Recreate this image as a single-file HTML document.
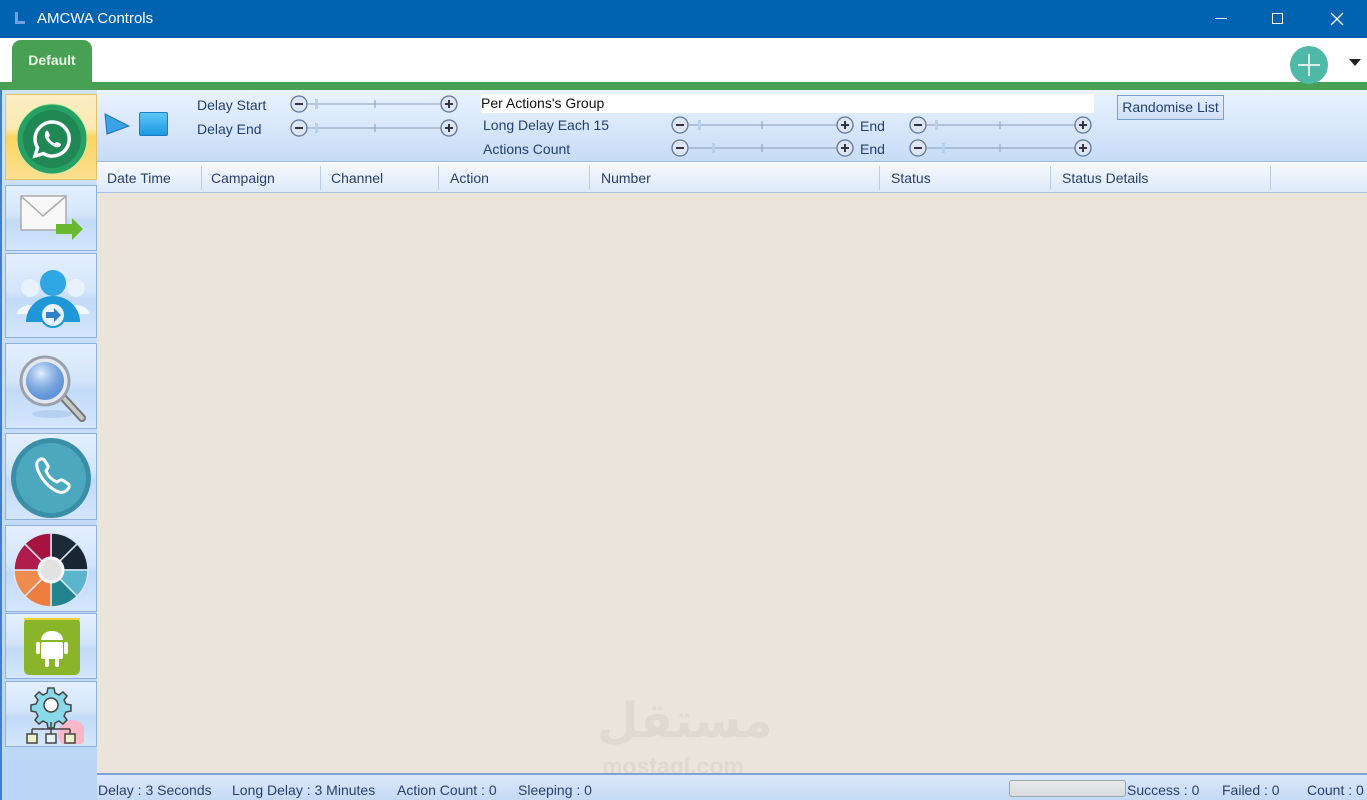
<!DOCTYPE html>
<html><head><meta charset="utf-8"><style>
*{margin:0;padding:0;box-sizing:border-box}
body{width:1367px;height:800px;overflow:hidden;position:relative;background:#fff;font-family:"Liberation Sans",sans-serif;font-size:14px;color:#1e3a6e}
.a{position:absolute}
#title{left:0;top:0;width:1367px;height:38px;background:#0063b1;color:#fff;font-size:15px}
#tabbar{left:0;top:38px;width:1367px;height:44px;background:#fff}
#green{left:0;top:82px;width:1367px;height:8px;background:#48a055}
#tab{left:12px;top:40px;width:80px;height:44px;background:#48a055;border-radius:9px 9px 0 0;color:#e8f5e0;font-weight:bold;font-size:14px;text-align:center;line-height:40px}
#side{left:0;top:90px;width:97px;height:710px;background:linear-gradient(#cfe2fb,#bcd6f7);border-left:2px solid #3f7fcf}
.btn{position:absolute;left:3px;width:92px;border:1px solid #8fb0d8;background:linear-gradient(#e4effd 0%,#d3e5fb 45%,#c2daf8 55%,#d3e6fc 100%)}
#tool{left:97px;top:90px;width:1270px;height:72px;background:linear-gradient(#eaf3fe,#c7dcf6);border-bottom:1px solid #9fbbe0}
#hdr{left:97px;top:163px;width:1270px;height:30px;background:linear-gradient(#f5f9ff,#dde9f8);border-bottom:1px solid #a9c0df;font-size:14px;color:#2a3f66}
.hc{position:absolute;top:7px}
.sep{position:absolute;top:3px;width:1px;height:24px;background:#b9cde6}
#grid{left:97px;top:193px;width:1270px;height:580px;background:#ebe4da}
#status{left:97px;top:773px;width:1270px;height:27px;background:linear-gradient(#dbe8fa,#c5daf5);border-top:2px solid #7ea3d6;font-size:14px;color:#2b3f6a}
.st{position:absolute;top:7px}
.lbl{position:absolute;font-size:14px;color:#24406e}
</style></head><body>
<div id="title" class="a">
 <svg class="a" style="left:14px;top:11px" width="12" height="14"><rect x="1" y="1" width="3" height="12" fill="#6fa0e0"/><rect x="1" y="10" width="10" height="3" fill="#6fa0e0"/></svg>
 <span class="a" style="left:37px;top:10px">AMCWA Controls</span>
 <div class="a" style="left:1215px;top:18px;width:12px;height:1px;background:#fff"></div>
 <div class="a" style="left:1272px;top:13px;width:11px;height:11px;border:1px solid #fff"></div>
 <svg class="a" style="left:1330px;top:12px" width="14" height="14"><path d="M1 1L13 13M13 1L1 13" stroke="#fff" stroke-width="1.3"/></svg>
</div>
<div id="tabbar" class="a"></div>
<div id="tab" class="a">Default</div>
<div id="green" class="a"></div>
<svg class="a" style="left:1290px;top:46px" width="40" height="40"><circle cx="19" cy="19" r="19" fill="#4fb9a8"/><path d="M19 8V30M8 19H30" stroke="#d8f0ec" stroke-width="2"/></svg>
<svg class="a" style="left:1348px;top:58px" width="14" height="10"><path d="M1 1H13L7 8Z" fill="#222"/></svg>

<div id="side" class="a">
 <div class="btn" style="top:4px;height:86px;background:linear-gradient(#fbeec4 0%,#fbe9b3 40%,#fbd560 50%,#fbe090 100%);border-color:#e0c16c">
  <svg class="a" style="left:10px;top:8px" width="72" height="72"><circle cx="36" cy="36" r="35" fill="#27a063" stroke="#c8e8a8"/><circle cx="36" cy="36" r="29" fill="#1f8855"/><path d="M36 19a17 17 0 0 0-14.5 25.8L19 53l8.5-2.4A17 17 0 1 0 36 19z" fill="none" stroke="#fff" stroke-width="3.5"/><path d="M29.5 29c1-2 2.5-1.5 3 0l1.3 3c.3 1-1.300 2-1 2.8 1.2 2.5 3 4.200 5.5 5.3 1 .3 1.7-1.5 2.7-1.2l3 1.4c1.3.6 1.4 2 0 3-2.5 2-6 1-10-2.5S27.5 33 29.5 29z" fill="#fff"/></svg>
 </div>
 <div class="btn" style="top:95px;height:66px">
  <svg class="a" style="left:14px;top:8px" width="66" height="50"><rect x="1" y="2" width="45" height="34" fill="#f8f8f8" stroke="#aaa" stroke-width="1.5"/><path d="M2 3L23 22L45 3" fill="none" stroke="#aaa" stroke-width="1.5"/><path d="M36 30H52V24L63 35L52 46V40H36Z" fill="#6ab82e"/></svg>
 </div>
 <div class="btn" style="top:163px;height:85px">
  <svg class="a" style="left:8px;top:10px" width="78" height="68"><circle cx="16" cy="24" r="9" fill="#e8f2fc"/><circle cx="62" cy="24" r="9" fill="#e8f2fc"/><path d="M2 50a15 14 0 0 1 28 0z" fill="#f0f7fe"/><path d="M48 50a15 14 0 0 1 28 0z" fill="#f0f7fe"/><circle cx="39" cy="19" r="13" fill="#31a6e4"/><path d="M12 58a27 26 0 0 1 54 0z" fill="#1f97d7"/><circle cx="39" cy="51" r="12" fill="#e8f3fd" stroke="#1f97d7" stroke-width="2"/><path d="M32 48h8v-4l7 7-7 7v-4h-8z" fill="#2f82c9"/></svg>
 </div>
 <div class="btn" style="top:253px;height:86px">
  <svg class="a" style="left:10px;top:8px" width="76" height="72"><defs><radialGradient id="g" cx="0.4" cy="0.3" r="0.7"><stop offset="0" stop-color="#e8f2ff"/><stop offset="1" stop-color="#5a8fd4" stop-opacity="0.3"/></radialGradient></defs><ellipse cx="36" cy="62" rx="20" ry="4" fill="#b6d0ee"/><path d="M44 42L66 66" stroke="#777" stroke-width="8" stroke-linecap="round"/><path d="M44 42L66 66" stroke="#c8c8c8" stroke-width="4" stroke-linecap="round"/><circle cx="29" cy="29" r="24" fill="#e4e8ee" stroke="#9aa2ad" stroke-width="3"/><circle cx="29" cy="29" r="19" fill="#5f95d8"/><circle cx="29" cy="29" r="19" fill="url(#g)"/></svg>
 </div>
 <div class="btn" style="top:343px;height:87px">
  <svg class="a" style="left:4px;top:3px" width="82" height="82"><circle cx="41" cy="41" r="40" fill="#3a8ea8"/><circle cx="41" cy="41" r="35" fill="#4ba8be"/><path d="M28 24c3-3 5-3 7 0l3 5c1 2-2 4-2 5 2 5 6 9 11 11 1 0 3-3 5-2l5 3c3 2 3 4 0 7-4 4-10 3-18-4S24 29 28 24z" fill="none" stroke="#fff" stroke-width="3"/></svg>
 </div>
 <div class="btn" style="top:435px;height:87px">
  <svg class="a" style="left:7px;top:6px" width="76" height="76" viewBox="-38 -38 76 76">
   <g stroke="#d8e6f5" stroke-width="1.5">
   <path d="M0 0L0-37A37 37 0 0 1 26.2-26.2Z" fill="#1b2a36"/>
   <path d="M0 0L26.2-26.2A37 37 0 0 1 37 0Z" fill="#1a2732"/>
   <path d="M0 0L37 0A37 37 0 0 1 26.2 26.2Z" fill="#5bb5cc"/>
   <path d="M0 0L26.2 26.2A37 37 0 0 1 0 37Z" fill="#23838f"/>
   <path d="M0 0L0 37A37 37 0 0 1-26.2 26.2Z" fill="#ee7d3f"/>
   <path d="M0 0L-26.2 26.2A37 37 0 0 1-37 0Z" fill="#ef8b4c"/>
   <path d="M0 0L-37 0A37 37 0 0 1-26.2-26.2Z" fill="#b01c4b"/>
   <path d="M0 0L-26.2-26.2A37 37 0 0 1 0-37Z" fill="#a8123f"/></g>
   <circle r="12" fill="#e2e2e2" stroke="#f6f6f6" stroke-width="3"/></svg>
 </div>
 <div class="btn" style="top:523px;height:66px">
  <svg class="a" style="left:18px;top:4px" width="56" height="57"><rect x="0" y="0" width="56" height="57" rx="5" fill="#8ab42a"/><rect x="0" y="0" width="56" height="2" fill="#f0d040"/><path d="M17 22a11 9 0 0 1 22 0z" fill="#fff"/><rect x="17" y="24" width="22" height="17" rx="2" fill="#fff"/><rect x="12" y="24" width="4" height="12" rx="2" fill="#fff"/><rect x="40" y="24" width="4" height="12" rx="2" fill="#fff"/><rect x="21" y="40" width="4" height="9" rx="2" fill="#fff"/><rect x="31" y="40" width="4" height="9" rx="2" fill="#fff"/></svg>
 </div>
 <div class="btn" style="top:591px;height:66px">
  <svg class="a" style="left:18px;top:4px" width="60" height="58"><circle cx="48" cy="48" r="14" fill="#f8b8c8"/><g transform="translate(27 19)"><g fill="#8ad9ea" stroke="#444" stroke-width="1.5"><path d="M-3-17h6l1 5 4 2 4-3 4 4-3 4 2 4 5 1v6l-5 1-2 4 3 4-4 4-4-3-4 2-1 5h-6l-1-5-4-2-4 3-4-4 3-4-2-4-5-1v-6l5-1 2-4-3-4 4-4 4 3 4-2z"/></g><circle r="7" fill="#fff" stroke="#444" stroke-width="1.5"/></g><path d="M27 36v7M8 43h38M8 43v5M27 43v5M46 43v5" stroke="#444" stroke-width="1.5" fill="none"/><rect x="3" y="48" width="10" height="9" fill="#eef0c8" stroke="#444" stroke-width="1.5"/><rect x="22" y="48" width="10" height="9" fill="#e8f0fa" stroke="#444" stroke-width="1.5"/><rect x="41" y="48" width="10" height="9" fill="#eef0c8" stroke="#444" stroke-width="1.5"/></svg>
 </div>
</div>

<div id="tool" class="a">
 <svg class="a" style="left:6px;top:22px" width="28" height="24"><path d="M2 2L26 14L4 22Z" fill="#3aa3e6" stroke="#1f6fb8"/></svg>
 <div class="a" style="left:42px;top:22px;width:29px;height:24px;background:linear-gradient(#5cc8f7,#1d97e0);border:1px solid #1a7fc4;border-radius:2px"></div>
 <span class="lbl" style="left:100px;top:7px">Delay Start</span>
 <span class="lbl" style="left:100px;top:31px">Delay End</span>
 <div class="a" style="left:384px;top:4px;width:613px;height:19px;background:#fff"></div>
 <span class="lbl" style="left:384px;top:5px;color:#111">Per Actions's Group</span>
 <span class="lbl" style="left:386px;top:27px">Long Delay Each 15</span>
 <span class="lbl" style="left:386px;top:51px">Actions Count</span>
 <span class="lbl" style="left:763px;top:28px">End</span>
 <span class="lbl" style="left:763px;top:51px">End</span>
 <div class="a" style="left:1020px;top:5px;width:107px;height:25px;border:1px solid #7a9fd0;background:linear-gradient(#e4eefc,#cfe0f7);font-size:14px;color:#24406e;text-align:center;line-height:22px">Randomise List</div>
 <svg class="a" style="left:0;top:0" width="1000" height="72">
  <defs>
  <g id="c"><circle cx="0" cy="0" r="8" fill="#dde6f2" stroke="#5f7598" stroke-width="1.3"/><path d="M-4 0H4" stroke="#334" stroke-width="2"/></g>
  <g id="p"><circle cx="0" cy="0" r="8" fill="#dde6f2" stroke="#5f7598" stroke-width="1.3"/><path d="M-4 0H4M0-4V4" stroke="#334" stroke-width="2"/></g>
  <g id="s"><line x1="9" y1="0" x2="149" y2="0" stroke="#8a9bb5"/><line x1="76" y1="-4" x2="76" y2="4" stroke="#8a9bb5"/><rect x="16" y="-5" width="3" height="10" fill="#b8d0ec"/><use href="#c"/><use href="#p" x="150"/></g>
  <g id="l"><line x1="9" y1="0" x2="157" y2="0" stroke="#8a9bb5"/><line x1="82" y1="-4" x2="82" y2="4" stroke="#8a9bb5"/><use href="#c"/><use href="#p" x="165"/></g>
  </defs>
  <use href="#s" x="202" y="14"/><use href="#s" x="202" y="38"/>
  <use href="#l" x="583" y="35"/><rect x="601" y="30" width="3" height="10" fill="#b8d0ec"/>
  <use href="#l" x="583" y="58"/><rect x="615" y="53" width="3" height="10" fill="#b8d0ec"/>
  <use href="#l" x="821" y="35"/><rect x="838" y="30" width="3" height="10" fill="#b8d0ec"/>
  <use href="#l" x="821" y="58"/><rect x="845" y="53" width="3" height="10" fill="#b8d0ec"/>
 </svg>
</div>

<div id="hdr" class="a">
 <span class="hc" style="left:10px">Date Time</span><div class="sep" style="left:104px"></div>
 <span class="hc" style="left:114px">Campaign</span><div class="sep" style="left:223px"></div>
 <span class="hc" style="left:234px">Channel</span><div class="sep" style="left:341px"></div>
 <span class="hc" style="left:353px">Action</span><div class="sep" style="left:492px"></div>
 <span class="hc" style="left:504px">Number</span><div class="sep" style="left:782px"></div>
 <span class="hc" style="left:794px">Status</span><div class="sep" style="left:953px"></div>
 <span class="hc" style="left:965px">Status Details</span><div class="sep" style="left:1173px"></div>
</div>
<div id="grid" class="a">
 <div class="a" style="left:500px;top:500px;font-size:48px;font-weight:bold;color:#e0d9d0;font-family:'DejaVu Sans',sans-serif">مستقل</div>
 <div class="a" style="left:505px;top:560px;font-size:23px;font-weight:bold;color:#e0d9d0">mostaql.com</div>
</div>
<div id="status" class="a">
 <span class="st" style="left:1px">Delay : 3 Seconds</span>
 <span class="st" style="left:135px">Long Delay : 3 Minutes</span>
 <span class="st" style="left:300px">Action Count : 0</span>
 <span class="st" style="left:421px">Sleeping : 0</span>
 <div class="a" style="left:912px;top:5px;width:117px;height:17px;border:1px solid #9aa;border-radius:3px;background:linear-gradient(#e8eaec,#d8dadd)"></div>
 <span class="st" style="left:1030px">Success : 0</span>
 <span class="st" style="left:1125px">Failed : 0</span>
 <span class="st" style="left:1210px">Count : 0</span>
</div>
</body></html>
